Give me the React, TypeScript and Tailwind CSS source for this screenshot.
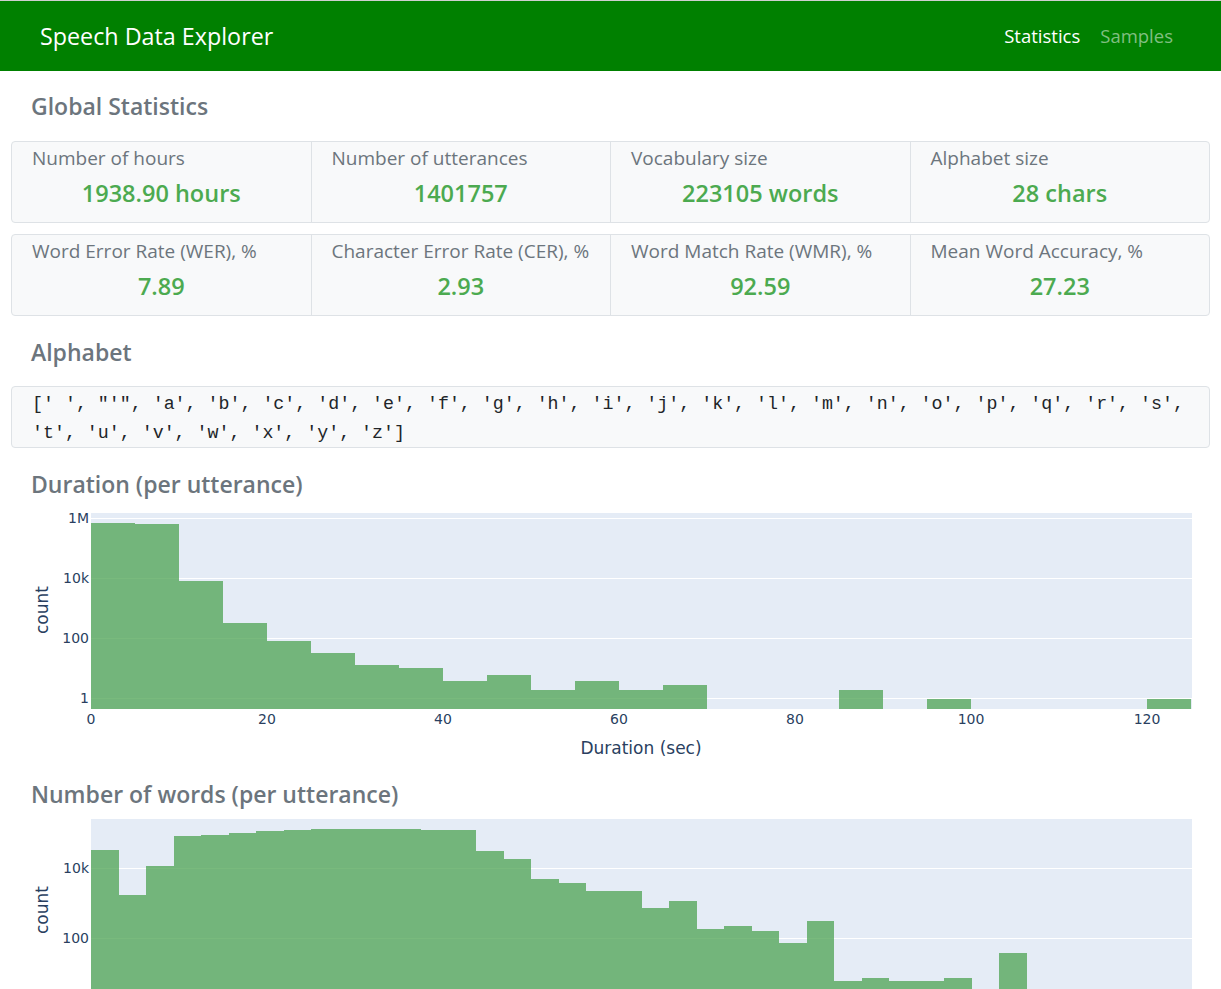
import React from 'react';

const statsTop = [
  { label: 'Number of hours', value: '1938.90 hours' },
  { label: 'Number of utterances', value: '1401757' },
  { label: 'Vocabulary size', value: '223105 words' },
  { label: 'Alphabet size', value: '28 chars' },
];

const statsBottom = [
  { label: 'Word Error Rate (WER), %', value: '7.89' },
  { label: 'Character Error Rate (CER), %', value: '2.93' },
  { label: 'Word Match Rate (WMR), %', value: '92.59' },
  { label: 'Mean Word Accuracy, %', value: '27.23' },
];

// [from, to, top] in seconds / local svg px
const durationBars: [number, number, number][] = [
  [0, 5, 24],
  [5, 10, 25],
  [10, 15, 82],
  [15, 20, 124],
  [20, 25, 142],
  [25, 30, 154],
  [30, 35, 166],
  [35, 40, 169],
  [40, 45, 182],
  [45, 50, 176],
  [50, 55, 191],
  [55, 60, 182],
  [60, 65, 191],
  [65, 70, 186],
  [85, 90, 191],
  [95, 100, 200],
  [120, 125, 200],
];

// top of each word-count bin (page y), null = empty bin
const wordBars: (number | null)[] = [
  850, 895, 866, 836, 835, 833, 831, 830, 829, 829, 829, 829, 830, 830, 851, 859,
  879, 883, 891, 891, 908, 901, 929, 926, 931, 943, 921, 981, 978, 981, 981, 978,
  null, 953, null, null, null, null, null, null,
];

const axisFont = { fontFamily: '"DejaVu Sans", Verdana, sans-serif' };

function StatRow({ items }: { items: { label: string; value: string }[] }) {
  return (
    <div className="flex h-[82px] rounded border border-[#dee2e6] bg-[#f8f9fa]">
      {items.map((it, i) => (
        <div
          key={it.label}
          className={
            i > 0
              ? 'flex-1 border-l border-[#dee2e6] px-5 pt-[3px]'
              : 'flex-1 px-5 pt-[3px]'
          }
        >
          <div className="text-[19px] leading-[26px] text-[#6c757d]">{it.label}</div>
          <div className="mt-[6px] text-center text-[23.5px] font-semibold leading-[32px] text-[#4caa50]">
            {it.value}
          </div>
        </div>
      ))}
    </div>
  );
}

function Heading({ children, className }: { children: React.ReactNode; className: string }) {
  return (
    <h4 className={'pl-5 text-[23px] font-semibold leading-[29px] text-[#6c757d] ' + className}>
      {children}
    </h4>
  );
}

const BAR = '#4ca352';
const AXIS = '#2a3f5f';

function CountTitle({ y }: { y: number }) {
  return (
    <text x={37} y={y} textAnchor="middle" fontSize={17} fill={AXIS} transform={`rotate(-90 37 ${y})`}>
      count
    </text>
  );
}

function DurationChart() {
  const x = (v: number) => 80 + 8.8 * v;
  return (
    <svg width={1199} height={281} className="block" style={axisFont}>
      <rect x={80} y={14} width={1101} height={196} fill="#e5ecf6" />
      {[19.5, 79.5, 139.5, 199.5].map((y) => (
        <line key={y} x1={80} x2={1181} y1={y} y2={y} stroke="#fff" strokeWidth={1} />
      ))}
      {durationBars.map(([a, b, top]) => (
        <rect
          key={a}
          x={x(a)}
          y={top}
          width={x(b) - x(a)}
          height={210 - top}
          fill={BAR}
          fillOpacity={0.75}
          shapeRendering="crispEdges"
        />
      ))}
      {[
        ['1M', 24],
        ['10k', 84],
        ['100', 144],
        ['1', 204],
      ].map(([t, y]) => (
        <text key={t} x={78} y={y} textAnchor="end" fontSize={14} fill={AXIS}>
          {t}
        </text>
      ))}
      {[0, 20, 40, 60, 80, 100, 120].map((v) => (
        <text key={v} x={x(v)} y={225} textAnchor="middle" fontSize={14} fill={AXIS}>
          {v}
        </text>
      ))}
      <text x={630} y={255} textAnchor="middle" fontSize={17} fill={AXIS}>
        Duration (sec)
      </text>
      <CountTitle y={111} />
    </svg>
  );
}

function WordsChart() {
  const w = 1101 / 40;
  return (
    <svg width={1199} height={300} className="block" style={axisFont}>
      <rect x={80} y={10} width={1101} height={290} fill="#e5ecf6" />
      {[59.5, 129.5].map((y) => (
        <line key={y} x1={80} x2={1181} y1={y} y2={y} stroke="#fff" strokeWidth={1} />
      ))}
      {wordBars.map((top, i) =>
        top === null ? null : (
          <rect
            key={i}
            x={80 + i * w}
            y={top - 809}
            width={w}
            height={300 - (top - 809)}
            fill={BAR}
            fillOpacity={0.75}
            shapeRendering="crispEdges"
          />
        )
      )}
      {[
        ['10k', 64],
        ['100', 134],
      ].map(([t, y]) => (
        <text key={t} x={78} y={y} textAnchor="end" fontSize={14} fill={AXIS}>
          {t}
        </text>
      ))}
      <CountTitle y={101} />
    </svg>
  );
}

export default function App() {
  return (
    <div className="h-[989px] overflow-hidden bg-white font-['Open_Sans',sans-serif]">
      <nav className="flex h-[71px] items-center justify-between border-t border-[#cfcfcf] bg-[#008000] pl-10 pr-12">
        <span className="text-[23.3px] leading-[32px] text-white">Speech Data Explorer</span>
        <div className="flex gap-5 text-[18.5px]">
          <span className="text-white">Statistics</span>
          <span className="text-[#80bf80]">Samples</span>
        </div>
      </nav>

      <main className="px-[11px]">
        <Heading className="mt-[21px]">Global Statistics</Heading>
        <div className="mt-[20px]">
          <StatRow items={statsTop} />
        </div>
        <div className="mt-[11px]">
          <StatRow items={statsBottom} />
        </div>

        <Heading className="mt-[22px]">Alphabet</Heading>
        <div className="mt-[19px] h-[62px] rounded border border-[#dee2e6] bg-[#f8f9fa] px-[20px] pt-[3px] font-['Liberation_Mono',monospace] text-[18.3px] leading-[29px] text-[#212529]">
          <div className="whitespace-pre">
            [' ', "'", 'a', 'b', 'c', 'd', 'e', 'f', 'g', 'h', 'i', 'j', 'k', 'l', 'm', 'n', 'o', 'p', 'q', 'r', 's',
          </div>
          <div className="whitespace-pre">'t', 'u', 'v', 'w', 'x', 'y', 'z']</div>
        </div>

        <Heading className="mt-[22px]">Duration (per utterance)</Heading>
        <DurationChart />

        <Heading className="">Number of words (per utterance)</Heading>
        <WordsChart />
      </main>
    </div>
  );
}
